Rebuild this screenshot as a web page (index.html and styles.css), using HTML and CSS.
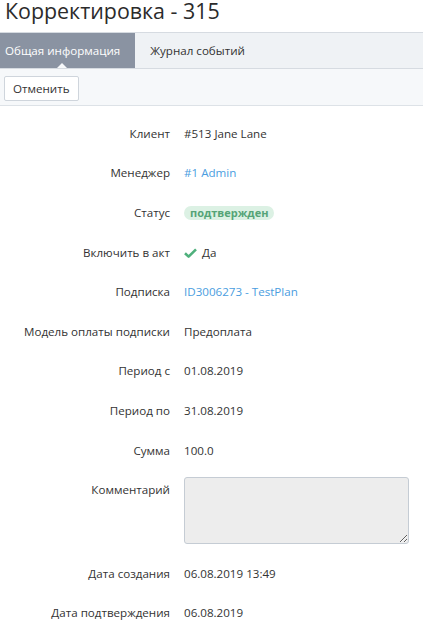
FILE: index.html
```html
<!DOCTYPE html>
<html lang="ru">
<head>
<meta charset="utf-8">
<title>Корректировка - 315</title>
<link rel="stylesheet" href="styles.css">
</head>
<body>
<h1 class="title">Корректировка - 315</h1>
<nav class="tabs">
  <div class="tab tab-active">Общая информация</div>
  <div class="tab">Журнал событий</div>
</nav>
<div class="toolbar">
  <button class="btn">Отменить</button>
</div>
<div class="details">
  <div class="row"><div class="label">Клиент</div><div class="value">#513 Jane Lane</div></div>
  <div class="row"><div class="label">Менеджер</div><div class="value"><a class="link">#1 Admin</a></div></div>
  <div class="row"><div class="label">Статус</div><div class="value"><span class="badge">подтвержден</span></div></div>
  <div class="row"><div class="label">Включить в акт</div><div class="value yes"><svg class="check" width="13" height="10" viewBox="0 0 13 10"><path d="M1 5.2 L4.6 8.6 L12 1.4" fill="none" stroke="#4fb07c" stroke-width="2.6" stroke-linejoin="round"/></svg>Да</div></div>
  <div class="row"><div class="label">Подписка</div><div class="value"><a class="link">ID3006273 - TestPlan</a></div></div>
  <div class="row"><div class="label">Модель оплаты подписки</div><div class="value">Предоплата</div></div>
  <div class="row"><div class="label">Период с</div><div class="value">01.08.2019</div></div>
  <div class="row"><div class="label">Период по</div><div class="value">31.08.2019</div></div>
  <div class="row"><div class="label">Сумма</div><div class="value">100.0</div></div>
  <div class="row row-comment"><div class="label">Комментарий</div><div class="value"><textarea class="comment" disabled></textarea></div></div>
  <div class="row"><div class="label">Дата создания</div><div class="value">06.08.2019 13:49</div></div>
  <div class="row"><div class="label">Дата подтверждения</div><div class="value">06.08.2019</div></div>
</div>
</body>
</html>
```

FILE: styles.css
```css
html, body {
  margin: 0;
  padding: 0;
  background: #fff;
}
body {
  font-family: "Open Sans", "Liberation Sans", sans-serif;
  font-size: 11.6px;
  color: #333;
}
.title {
  margin: 0 0 10px 0;
  padding-left: 5px;
  font-size: 21.4px;
  line-height: 22px;
  font-weight: 400;
  color: #2b2b2b;
}
.tabs {
  display: flex;
  height: 35px;
  background: #eff2f5;
  border-top: 1px solid #d6dbe1;
  border-bottom: 1px solid #d6dbe1;
}
.tab {
  display: flex;
  align-items: center;
  padding: 0 15px;
  color: #333;
}
.tab-active {
  position: relative;
  padding-left: 5px;
  background: #8a93a2;
  color: #fff;
}
.tab-active::after {
  content: "";
  position: absolute;
  left: 57px;
  bottom: 0;
  border-left: 5px solid transparent;
  border-right: 5px solid transparent;
  border-bottom: 5px solid #f6f8fa;
}
.toolbar {
  padding: 7px 4px 4px;
  background: #f6f8fa;
  border-bottom: 1px solid #dde2e7;
}
.btn {
  height: 25px;
  padding: 0 8px;
  font-family: inherit;
  font-size: 11.6px;
  color: #333;
  background: #fff;
  border: 1px solid #cfd5dc;
  border-radius: 2px;
}
.details {
  padding-top: 8px;
}
.row {
  display: grid;
  grid-template-columns: 170px 1fr;
  column-gap: 14px;
  padding: 10.8px 0;
  line-height: 18px;
}
.label {
  text-align: right;
}
.value {
  display: flex;
  align-items: center;
}
.link {
  color: #4a9de0;
  text-decoration: none;
}
.badge {
  display: inline-block;
  height: 14px;
  line-height: 14px;
  padding: 0 6px;
  border-radius: 7px;
  background: #dcf1e4;
  color: #55a477;
  font-size: 11px;
  font-weight: 700;
}
.check {
  margin-right: 5px;
}
.row-comment {
  padding: 6.4px 0 10px;
}
.row-comment .label {
  padding-top: 4px;
}
.row-comment .value {
  align-items: flex-start;
}
.comment {
  display: block;
  box-sizing: border-box;
  width: 225px;
  height: 67px;
  margin: 0;
  background: #ededed;
  border: 1px solid #c5ccd4;
  border-radius: 3px;
  resize: both;
}
```
